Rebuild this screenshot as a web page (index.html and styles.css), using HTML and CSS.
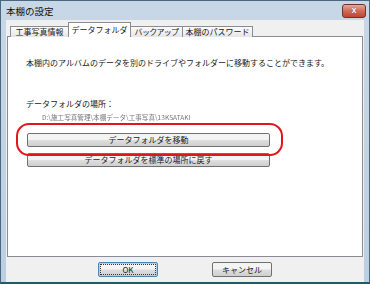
FILE: index.html
```html
<!doctype html>
<html>
<head>
<meta charset="utf-8">
<title>本棚の設定</title>
<link rel="stylesheet" href="styles.css">
</head>
<body>
	<div class="window">
		<div class="titlebar">
			<span class="title">本棚の設定</span>
			<span class="close">x</span>
		</div>
		<div class="client">
			<div class="tabs">
				<span class="tab t1">工事写真情報</span>
				<span class="tab t2 active">データフォルダ</span>
				<span class="tab t3">バックアップ</span>
				<span class="tab t4">本棚のパスワード</span>
			</div>
			<div class="panel">
				<p class="desc">本棚内のアルバムのデータを別のドライブやフォルダーに移動することができます。</p>
				<p class="label">データフォルダの場所：</p>
				<p class="path">D:\施工写真管理\本棚データ\工事写真\13KSATAKI</p>
				<div class="mark">
					<span class="btn wide">データフォルダを移動</span>
					<span class="ring"></span>
				</div>
				<span class="btn wide second">データフォルダを標準の場所に戻す</span>
			</div>
			<div class="footer">
				<span class="btn small default"><span class="focus">OK</span></span>
				<span class="btn small">キャンセル</span>
			</div>
		</div>
	</div>
</body>
</html>
```

FILE: styles.css
```css
body{ margin:0; background:#fff; font-family:"Noto Sans CJK JP", "Liberation Sans", sans-serif; color:#1a1a1a;}
p{ margin:0;}
.window{ width:370px; height:284px; box-sizing:border-box; display:flex; flex-direction:column; background:linear-gradient(#c8d7e6, #bccfe2); border:1px solid #4a6780; border-bottom:2px solid #1d5a6c; padding:0 5px 0 5px;}
.titlebar{ height:19px; display:flex; align-items:center; justify-content:space-between; margin-right:-2px;}
.title{ font-size:9.5px; line-height:12px; color:#111;}
.close{ width:22px; height:12px; margin-top:1px; border:1px solid #6e3328; border-radius:3px; background:linear-gradient(#e9a89a, #d06a55 50%, #bf4530); color:#fff; font:bold 9px/11px "Liberation Sans", sans-serif; text-align:center; text-shadow:0 0 1px #5a1a10;}
.client{ flex:1; display:flex; flex-direction:column; background:#f0f0f0; padding:2px 1px 0 1px;}
.tabs{ display:flex; align-items:flex-end; padding-left:3px; height:15px; margin-bottom:-1px; position:relative; z-index:1;}
.tab{ height:11px; box-sizing:border-box; border:1px solid #898c95; border-bottom:none; margin-right:-1px; background:linear-gradient(#fcfcfc, #e6e6e6); font-size:8px; line-height:10px; white-space:nowrap; text-align:center; overflow:hidden;}
.tab.active{ height:15px; padding-top:2px; background:#fff; line-height:10px;}
.t1{ width:59px;}
.t2{ width:63px;}
.t3{ width:53px; letter-spacing:-0.7px;}
.t4{ width:71px;}
.panel{ flex:1; background:#fff; border:1px solid #898c95; padding:20px 0 0 18px; font-size:8px;}
.desc{ line-height:12px;}
.label{ line-height:12px; margin-top:29px;}
.path{ margin:3px 0 0 16px; font-size:6.6px; line-height:8px; color:#777; filter:blur(0.5px); white-space:nowrap;}
.btn{ display:flex; align-items:center; justify-content:center; box-sizing:border-box; border:1px solid #707070; border-radius:2px; background:linear-gradient(#f4f4f4 45%, #dddddd 55%, #cfcfcf); font-size:8px; line-height:10px; white-space:nowrap;}
.mark{ position:relative; margin:12px 0 0 1px; width:243px;}
.wide{ width:243px; height:14px;}
.second{ margin:6px 0 0 1px;}
.ring{ position:absolute; left:-11px; right:-13px; top:-10px; bottom:-9px; border:2.5px solid #e3151b; border-radius:13px;}
.footer{ height:25px; display:flex; align-items:center; justify-content:center; gap:54px;}
.small{ width:60px; height:15px;}
.default{ border-color:#4a86b4; box-shadow:inset 0 0 0 1px #a9d3ef;}
.focus{ display:flex; align-items:center; justify-content:center; width:54px; height:9px; border:1px dotted #333;}
```
